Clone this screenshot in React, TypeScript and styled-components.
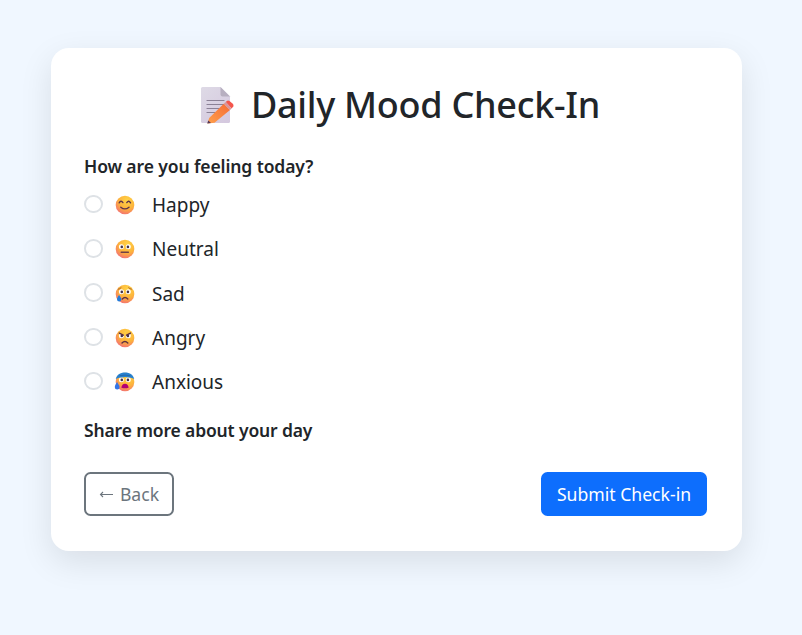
import React from "react";
import styled, { createGlobalStyle } from "styled-components";

const GlobalStyle = createGlobalStyle`
  * { box-sizing: border-box; }
  body {
    margin: 0;
    min-height: 635px;
    overflow: hidden;
    background: #f0f7ff;
    color: #212529;
    font-family: "Segoe UI", "Noto Sans", "Open Sans", sans-serif;
  }
`;

const Page = styled.main`
  padding: 48px 60px 84px 51px;
`;

const Card = styled.form`
  display: flex;
  flex-direction: column;
  height: 503px;
  padding: 33px 35px 35px 33px;
  border-radius: 18px;
  background: #fff;
  box-shadow: 0 11px 33px rgba(0, 0, 0, 0.1);
`;

const Header = styled.header`
  display: flex;
  height: 48px;
  margin-bottom: 24px;
  padding-left: 112px;
  align-items: center;
  gap: 17px;
`;

const Title = styled.h1`
  margin: 0;
  font-size: 36px;
  font-weight: 500;
  line-height: 48px;
  letter-spacing: -0.27px;
  white-space: nowrap;
`;

const Question = styled.p<{ $spacing: number }>`
  margin: 0;
  font-size: 17.5px;
  font-weight: 600;
  line-height: 26px;
  letter-spacing: ${({ $spacing }) => $spacing}px;
`;

const Choices = styled.div`
  display: grid;
  grid-auto-rows: 44.25px;
  margin: 3px 0 14px;
`;

const Choice = styled.label`
  display: flex;
  align-items: center;
`;

const Radio = styled.input`
  appearance: none;
  width: 18.5px;
  height: 18.5px;
  margin: 0 12.5px 0 0;
  border: 2px solid #dee2e6;
  border-radius: 50%;
  background: #fff;
`;

const Face = styled.svg`
  width: 20px;
  height: 20px;
  margin: 2px 17px 0 0;
  overflow: visible;
`;

const ChoiceText = styled.span`
  padding-top: 2px;
  font-size: 19px;
  line-height: 28px;
`;

const Actions = styled.footer`
  display: flex;
  justify-content: space-between;
  margin-top: auto;
`;

const Button = styled.button<{ $primary?: boolean }>`
  display: flex;
  align-items: center;
  justify-content: center;
  gap: 6px;
  width: ${({ $primary }) => ($primary ? 166 : 90)}px;
  height: 44px;
  padding: 0 0 1px;
  border: 2px solid ${({ $primary }) => ($primary ? "#0d6efd" : "#6c757d")};
  border-radius: 6.5px;
  background: ${({ $primary }) => ($primary ? "#0d6efd" : "#fff")};
  color: ${({ $primary }) => ($primary ? "#fff" : "#6c757d")};
  font: 400 17.6px "Segoe UI", "Noto Sans", "Open Sans", sans-serif;
  white-space: nowrap;
`;

type Mood = "happy" | "neutral" | "sad" | "angry" | "anxious";

const choices: { mood: Mood; label: string }[] = [
  { mood: "happy", label: "Happy" },
  { mood: "neutral", label: "Neutral" },
  { mood: "sad", label: "Sad" },
  { mood: "angry", label: "Angry" },
  { mood: "anxious", label: "Anxious" },
];

function MoodFace({ mood }: { mood: Mood }) {
  return (
    <Face viewBox="0 0 20 20" aria-hidden="true">
      <defs>
        <radialGradient id={`skin-${mood}`} cx="62%" cy="26%" r="82%">
          <stop offset="0" stopColor="#ffd447" />
          <stop offset=".55" stopColor="#fdb33b" />
          <stop offset="1" stopColor="#f2697a" />
        </radialGradient>
      </defs>
      <circle cx="10" cy="10" r="9.3" fill={`url(#skin-${mood})`} />
      {mood !== "happy" && (
        <g>
          <circle cx="6.4" cy="7.8" r="2.5" fill="#fff" />
          <circle cx="13.3" cy="7.8" r="2.5" fill="#fff" />
          <circle cx="6.8" cy="7.9" r="1.3" fill="#453347" />
          <circle cx="12.9" cy="7.9" r="1.3" fill="#453347" />
        </g>
      )}
      {mood === "happy" && (
        <path d="M4.2 7.8Q6 4.7 7.9 7.6M11.8 7.6Q13.7 4.7 15.5 7.8M5.8 12.2Q9.9 15.6 14 12.2" fill="none" stroke="#5c344b" strokeWidth="1.4" strokeLinecap="round" />
      )}
      {mood === "neutral" && <path d="M6.2 13.2H13.4" stroke="#704047" strokeWidth="1.4" strokeLinecap="round" />}
      {mood === "sad" && (
        <g>
          <path d="M3.3 5.2Q4.8 5 6 3.8M13.7 3.8Q15 5 16.4 5.2" fill="none" stroke="#a56330" strokeLinecap="round" />
          <path d="M7.3 15Q10 12 12.8 15" fill="none" stroke="#5f3044" strokeWidth="1.4" strokeLinecap="round" />
          <path d="M4 11C3 13 2 13.8 2 15.3A2.2 2.2 0 0 0 6.4 15.3C6.4 13.8 5 12.5 4 11Z" fill="#237bd9" />
        </g>
      )}
      {mood === "angry" && (
        <g>
          <path d="M3.5 5.5L8.7 7V3.8L4.3 3.5ZM16.3 5.5L11.1 7V3.8L15.5 3.5Z" fill="#ffc33c" />
          <path d="M4.3 5.1L8.3 7.2M15.5 5.1L11.5 7.2M7 15Q9.9 12 12.8 15" fill="none" stroke="#5d3040" strokeWidth="1.4" strokeLinecap="round" />
        </g>
      )}
      {mood === "anxious" && (
        <g>
          <path d="M.8 7.1C1.3 3.1 5.2.5 10 .5S18.7 3.1 19.2 7.1Q16.5 5.4 14 5.6Q10 4.6 6.5 5.6Q3.5 5.2.8 7.1Z" fill="#2881ce" />
          <path d="M4.5 3.8Q10 2.4 15.5 3.8" fill="none" stroke="#2369ac" />
          <path d="M6.4 15.7Q6.8 11.7 10 11.7T13.6 15.7Q10 17 6.4 15.7Z" fill="#b40073" />
          <path d="M2.1 10C.7 12.5-.2 13.3-.2 15.2A2.4 2.4 0 0 0 4.6 15.2C4.6 13.3 3 12 2.1 10Z" fill="#3376e7" />
        </g>
      )}
    </Face>
  );
}

function NoteIcon() {
  return (
    <svg width="38" height="40" viewBox="0 0 38 40" aria-hidden="true">
      <defs>
        <linearGradient id="paper" x1="0" y1="0" x2=".8" y2="1">
          <stop stopColor="#dedae6" />
          <stop offset="1" stopColor="#d5c9df" />
        </linearGradient>
        <linearGradient id="pencil" x1="0" y1="1" x2="1" y2="0">
          <stop stopColor="#ffa04b" />
          <stop offset="1" stopColor="#f56b36" />
        </linearGradient>
      </defs>
      <path d="M6.5 2H24.5L34 11.5V36.5A1.5 1.5 0 0 1 32.5 38H6.5A1.5 1.5 0 0 1 5 36.5V3.5A1.5 1.5 0 0 1 6.5 2Z" fill="url(#paper)" />
      <path d="M24.5 2V9.5Q24.5 11.5 26.5 11.5H34Z" fill="#b7afc0" />
      <path d="M11 15.5H28M11 19.5H28M11 23.5H26M11 27.5H21" stroke="#8b8196" strokeWidth="1.2" strokeLinecap="round" />
      <path d="M11.5 38.5L13.2 33L27.8 18.7L34 25L18.5 37.8Z" fill="url(#pencil)" />
      <path d="M29.8 17L30.8 16Q32 15 33.5 16L36.8 18.8Q38 20 37.3 21.5L35.6 23.5Z" fill="#f4554c" />
      <path d="M27.8 18.7L29.8 17L35.6 23.5L34 25Z" fill="#d9969b" />
      <path d="M11.2 38.6L12.3 35.6L15 38Z" fill="#513657" />
    </svg>
  );
}

function BackArrow() {
  return (
    <svg width="15" height="12" viewBox="0 0 15 12" aria-hidden="true">
      <path d="M4 4L1.5 6.5L4 9M1.5 6.5H14" fill="none" stroke="currentColor" strokeWidth="1.1" />
    </svg>
  );
}

export default function App() {
  return (
    <>
      <GlobalStyle />
      <Page>
        <Card onSubmit={(event) => event.preventDefault()}>
          <Header>
            <NoteIcon />
            <Title>Daily Mood Check-In</Title>
          </Header>
          <Question $spacing={-0.1}>How are you feeling today?</Question>
          <Choices role="radiogroup">
            {choices.map(({ mood, label }) => (
              <Choice key={mood}>
                <Radio type="radio" name="mood" value={mood} />
                <MoodFace mood={mood} />
                <ChoiceText>{label}</ChoiceText>
              </Choice>
            ))}
          </Choices>
          <Question $spacing={-0.15}>Share more about your day</Question>
          <Actions>
            <Button type="button"><BackArrow /><span>Back</span></Button>
            <Button type="submit" $primary>Submit Check-in</Button>
          </Actions>
        </Card>
      </Page>
    </>
  );
}
